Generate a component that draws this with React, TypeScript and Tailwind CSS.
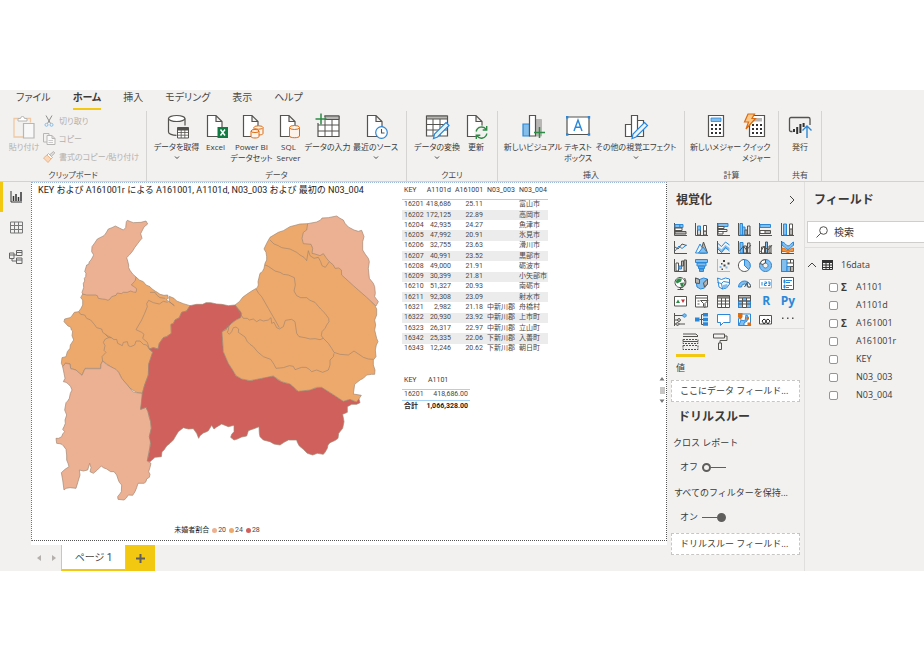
import type { ReactNode } from "react";

type CityRow = [key: string, population: string, rate: string, district: string, city: string];

const CITY_ROWS: CityRow[] = [
  ["16201", "418,686", "25.11", "", "富山市"],
  ["16202", "172,125", "22.89", "", "高岡市"],
  ["16204", "42,935", "24.27", "", "魚津市"],
  ["16205", "47,992", "20.91", "", "氷見市"],
  ["16206", "32,755", "23.63", "", "滑川市"],
  ["16207", "40,991", "23.52", "", "黒部市"],
  ["16208", "49,000", "21.91", "", "砺波市"],
  ["16209", "30,399", "21.81", "", "小矢部市"],
  ["16210", "51,327", "20.93", "", "南砺市"],
  ["16211", "92,308", "23.09", "", "射水市"],
  ["16321", "2,982", "21.18", "中新川郡", "舟橋村"],
  ["16322", "20,930", "23.92", "中新川郡", "上市町"],
  ["16323", "26,317", "22.97", "中新川郡", "立山町"],
  ["16342", "25,335", "22.06", "下新川郡", "入善町"],
  ["16343", "12,246", "20.62", "下新川郡", "朝日町"],
];

const FIELDS = [
  { name: "A1101", sum: true },
  { name: "A1101d", sum: false },
  { name: "A161001", sum: true },
  { name: "A161001r", sum: false },
  { name: "KEY", sum: false },
  { name: "N03_003", sum: false },
  { name: "N03_004", sum: false },
];

const TABS = ["ファイル", "ホーム", "挿入", "モデリング", "表示", "ヘルプ"];

const LEGEND = [
  { label: "20", dot: "bg-[#ecb093]" },
  { label: "24", dot: "bg-[#eda96c]" },
  { label: "28", dot: "bg-[#d0605c]" },
];

const G = "#55534f";
const B = "#2b88d8";
const L = "#83beec";
const S = "#b8b6b4";

/* ---------- ribbon icons ---------- */

function Icon24({ children }: { children: ReactNode }) {
  return (
    <svg viewBox="0 0 24 24" width="24" height="24" fill="none" stroke={G} className="shrink-0 overflow-visible" aria-hidden>
      {children}
    </svg>
  );
}

const DocShape = () => <path d="M3.5.5h8.5l6 6v15H3.5zM12 .5v6h6" fill="#fff" strokeWidth="1.2" />;

const GetDataIcon = () => (
  <Icon24>
    <path d="M3.5 3.5v13.5c0 2 4 3.300 8 3.300M20 3.500v7" strokeWidth="1.200" />
    <ellipse cx="11.700" cy="3.500" rx="8.200" ry="3" fill="#fff" strokeWidth="1.200" />
    <path d="M12.500 12.500h11v10.500h-11z" fill="#fff" />
    <path d="M12.500 13h11v2h-11z" fill={G} />
    <path d="M12.500 17.500h11M12.500 20.200h11M16.200 15v8M19.800 15v8" strokeWidth=".8" />
  </Icon24>
);

const ExcelIcon = () => (
  <Icon24>
    <DocShape />
    <path d="M13.500 12h10.500v11h-10.500z" fill="#107c41" stroke="none" />
    <path d="M16.500 14.500l4.500 6M21 14.500l-4.500 6" stroke="#fff" strokeWidth="1.500" />
  </Icon24>
);

const DatasetIcon = () => (
  <Icon24>
    <DocShape />
    <g stroke="#dd6b10" fill="#fdf3ea">
      <path d="M14 12.500v6c0 2 9 2 9 0v-6" />
      <ellipse cx="18.500" cy="12.500" rx="4.500" ry="1.700" />
      <path d="M11 16v5.500c0 2 8 2 8 0v-5.500" />
      <ellipse cx="15" cy="16" rx="4" ry="1.500" />
    </g>
  </Icon24>
);

const SqlIcon = () => (
  <Icon24>
    <DocShape />
    <g stroke="#dd6b10" fill="#fdf3ea">
      <path d="M12.500 12.500v8.500c0 2.300 10 2.300 10 0v-8.500" />
      <ellipse cx="17.500" cy="12.500" rx="5" ry="2" />
    </g>
  </Icon24>
);

const EnterDataIcon = () => (
  <Icon24>
    <path d="M2 1h21v20.500H2z" fill="#fff" strokeWidth="1.200" />
    <path d="M9 1h14v3.500H9z" fill={S} />
    <path d="M2 10h21M2 16h21M9 4v17.500M16 4v17.500" />
    <path d="M-1 -1h9v9h-9z" fill="#f2f1f0" stroke="none" />
    <path d="M5 -1.500v11M-.5 4h11" stroke="#2e8b45" strokeWidth="1.500" />
  </Icon24>
);

const RecentIcon = () => (
  <Icon24>
    <DocShape />
    <circle cx="17.500" cy="17.500" r="5.800" fill="#fff" stroke={B} strokeWidth="1.200" />
    <path d="M17.500 14v4h3" strokeWidth="1.100" />
  </Icon24>
);

const TransformIcon = () => (
  <Icon24>
    <path d="M1.500 1h21v20H1.500z" fill="#fff" strokeWidth="1.200" />
    <path d="M1.500 1h21v3h-21z" fill={S} />
    <path d="M1.500 9.500h21M1.500 15h21M8 4v17M15 4v17" />
    <path d="M21 7.500l3 3-11.500 11.500-4 1.500 1-4.500z" fill="#eaf4fc" stroke={B} strokeWidth="1.200" />
  </Icon24>
);

const RefreshIcon = () => (
  <Icon24>
    <DocShape />
    <circle cx="17.500" cy="17.500" r="7" fill="#f2f1f0" stroke="none" />
    <path d="M12.200 16.500a5.500 5.500 0 0 1 10-2M22.800 18.500a5.500 5.500 0 0 1-10 2.200M22.700 11v4h-4M12.300 24v-3.700h4" stroke="#2e8b45" strokeWidth="1.400" />
  </Icon24>
);

const NewVisualIcon = () => (
  <Icon24>
    <path d="M2 9h6.500v12H2z" fill={L} stroke={B} strokeWidth="1.200" />
    <path d="M14.500 4.500h6v16.500h-6z" fill={S} stroke={S} />
    <path d="M8.500 .5h6v20.500h-6z" fill="#fff" strokeWidth="1.200" />
    <path d="M18.500 12v11M13 17.500h11" stroke="#2e8b45" strokeWidth="1.500" />
  </Icon24>
);

const TextBoxIcon = () => (
  <Icon24>
    <path d="M1 2h22v17.500H1z" fill="#fff" strokeWidth="1.200" />
    <path d="M8 16l4-11 4 11M9.500 12.300h5" stroke={B} strokeWidth="1.400" />
    <path d="M0 1h2.400v2.400H0zM21.800 1h2.400v2.400h-2.400zM0 18.300h2.400v2.400H0zM21.800 18.300h2.400v2.400h-2.400z" fill={B} stroke="none" />
  </Icon24>
);

const MoreVisualsIcon = () => (
  <Icon24>
    <path d="M1.500 9.500h6v12h-6zM13.500 5.500h6v16h-6zM7.500 .5h6v21h-6z" fill="#fff" strokeWidth="1.200" />
    <path d="M20.500 7.500l3 3-11.500 11.500-4 1.500 1-4.500z" fill="#eaf4fc" stroke={B} strokeWidth="1.200" />
  </Icon24>
);

const CalculatorShape = () => (
  <>
    <path d="M4.500 .5h15v21h-15z" fill="#fff" strokeWidth="1.200" />
    <path d="M7 9h2v2H7zM11 9h2v2h-2zM15 9h2v2h-2zM7 13h2v2H7zM11 13h2v2h-2zM15 13h2v2h-2zM7 17h2v2H7zM11 17h2v2h-2zM15 17h2v2h-2z" fill="#333" stroke="none" />
  </>
);

const MeasureIcon = () => (
  <Icon24>
    <CalculatorShape />
    <path d="M7 3h10v3.500H7z" fill={L} stroke={B} strokeWidth=".8" />
  </Icon24>
);

const QuickMeasureIcon = () => (
  <Icon24>
    <CalculatorShape />
    <path d="M7 3h10v3.500H7z" fill={S} stroke="none" />
    <path d="M3 -1h6.500l-2.500 4.500h3.500l-9.500 10.500 2.500-7H-.5z" fill="#fbc98a" stroke="#dd6b10" strokeWidth="1.200" />
  </Icon24>
);

const PublishIcon = () => (
  <Icon24>
    <path d="M4.500 16.500H3q-1.500 0-1.500-1.500V4q0-1.500 1.500-1.500h17.500q1.500 0 1.500 1.500v6" strokeWidth="1.300" />
    <path d="M6 14v3M9.200 12v7M12.400 9v9M15.600 8v4" stroke="#333" strokeWidth="2" />
    <path d="M19 23V11.500M14.500 15.500l4.500-4.500 4.500 4.500" stroke={B} strokeWidth="1.400" />
  </Icon24>
);

const PasteIcon = () => (
  <Icon24>
    <path d="M8 3.500H2v18.500h9M13 3.500h5.500v4" stroke="#f0c9a2" strokeWidth="1.300" />
    <path d="M6 6V3.500h2.500a2 2 0 0 1 4 0H15V6z" fill="#fff" stroke={S} />
    <path d="M11.500 8.500h10.500v14.500h-10.500z" fill="#f8f8f8" stroke={S} strokeWidth="1.200" />
  </Icon24>
);

function Icon12({ children }: { children: ReactNode }) {
  return (
    <svg viewBox="0 0 12 12" width="12" height="12" fill="none" stroke={S} className="shrink-0 overflow-visible" aria-hidden>
      {children}
    </svg>
  );
}

const CutIcon = () => (
  <Icon12>
    <path d="M3 .5l4.500 8M9 .5l-4.500 8" stroke="#8f8d8b" />
    <circle cx="3.500" cy="9.800" r="1.500" stroke={L} />
    <circle cx="8.500" cy="9.800" r="1.500" stroke={L} />
  </Icon12>
);

const CopyIcon = () => (
  <Icon12>
    <path d="M4 9H.500V.500h5.500v2" />
    <path d="M4 2.500h5l3 3v6H4zM9 2.500v3h3" fill="#fafafa" />
    <path d="M5.500 7.500h4.500M5.500 9.500h4.500" strokeWidth=".7" />
  </Icon12>
);

const BrushIcon = () => (
  <Icon12>
    <path d="M7 3.500l3.500-3 1.300 1.500-3.300 3.200" fill="#ddd" />
    <path d="M5.500 2.500l4 4-1.500 1.300-4-3.800z" fill="#fff" />
    <path d="M4 4l4 4-3 3.500L.500 7z" fill="#f8d9bc" stroke="#eab68a" />
  </Icon12>
);

/* ---------- visualization gallery icons ---------- */

// [path, fill, stroke]
type Shape = [d: string, fill: string, stroke?: string];

const AXIS = "M.5 0v12.500H13";

const VISUALS: { name: string; shapes: Shape[] }[] = [
  { name: "積み上げ横棒グラフ", shapes: [[AXIS, "none", G], ["M1 1.500h5v3H1z", L, B], ["M6 1.500h3v3H6z", L, B], ["M1 5h7v2.500H1z", "#fff", G], ["M1 8.500h11v2.500H1z", S, G]] },
  { name: "積み上げ縦棒グラフ", shapes: [[AXIS, "none", G], ["M2.500 6h3v6h-3zM8.500 8h3v4h-3z", "#d9d8d7", G], ["M2.500 3h3v4h-3z", L, B], ["M8.500 2.500h3V8h-3z", "#fff", G]] },
  { name: "集合横棒グラフ", shapes: [[AXIS, "none", G], ["M1 .5h10v3H1z", L, B], ["M1 3.500h6v2H1zM1 6.500h9v2H1zM1 8.500h5v2.500H1z", "#fff", G]] },
  { name: "集合縦棒グラフ", shapes: [[AXIS, "none", G], ["M2 .5h2.500v11.500H2z", L, B], ["M4.500 4h2.500v8H4.500z", L, B], ["M7 7h2v5H7zM9.500 3h2.500v9H9.500z", "#e5e4e3", G]] },
  { name: "100% 積み上げ横棒グラフ", shapes: [[AXIS, "none", G], ["M1 1.500h10.500v3H1z", L, B], ["M1 7.500h10.500v3H1z", S, G], ["M1 7.500h5v3H1z", "#fff", G]] },
  { name: "100% 積み上げ縦棒グラフ", shapes: [[AXIS, "none", G], ["M2.500 1h3v11h-3z", L, B], ["M8.500 1h3v11h-3z", "#fff", G], ["M8.500 6h3v6h-3z", S, G]] },
  { name: "折れ線グラフ", shapes: [[AXIS, "none", G], ["M1 10l4-5 3 2.500L12.500 4", "none", B], ["M1 6l3 2 4-5 4.500 1.500", "none", G]] },
  { name: "面グラフ", shapes: [["M5 12L8.500 1l4 11z", S, G], ["M.500 12L5 3l5 9z", "#e8f3fc", B], ["M3.500 12l4.500-6 4.500 6z", L, B]] },
  { name: "積み上げ面グラフ", shapes: [[AXIS, "none", G], ["M1 5.500l3.500 3L8.500 4l4 3v2l-4-1-4 4L1 8z", L, "none"], ["M1 2.500l3.500 3 4-4.500 4 3M1 8l3.500 3.500 4-5 4 3.500", "none", B]] },
  { name: "折れ線および積み上げ縦棒グラフ", shapes: [[AXIS, "none", G], ["M2 1.500h3v10.500H2z", L, B], ["M5.500 5h3v7h-3zM9.500 2h2.500v10H9.500z", "#ddd", G], ["M1.500 10l4-5 3 4 4.500-5", "none", G]] },
  { name: "折れ線および集合縦棒グラフ", shapes: [[AXIS, "none", G], ["M2.500 6h3v6h-3z", "#fff", G], ["M6.500 1h2v11h-2z", L, G], ["M10 5h2v7h-2z", "#ddd", G], ["M1.500 11l3.500-6 4 4 4-5", "none", G]] },
  { name: "リボン グラフ", shapes: [[AXIS, "none", G], ["M1 1c3 0 4 4 6 4S10 2 12.500 1v3.500c-2 0-3 4-5.500 4S4 5 1 4.500z", L, B], ["M1 7c3 0 4 2.500 6 2.500S10 7 12.500 7v3.500H9.500L7 11.500 4 10.500H1z", "#f09a4a", "#dd6b10"]] },
  { name: "ウォーターフォール図", shapes: [[AXIS, "none", G], ["M2 4h2.500v8H2z", "#fff", G], ["M5 7h2.500v3H5z", L, B], ["M7.500 2h2v5h-2zM10 1h2.500v11H10z", S, G]] },
  { name: "じょうごグラフ", shapes: [["M.5 .5h12v3H.5z", L, B], ["M2 4h9v3H2z", L, B], ["M3.500 7h6v2.500h-6zM4.500 10h4v2.500h-4z", "#5aa9e6", B]] },
  { name: "散布図", shapes: [[AXIS, "none", S], ["M2.500 7h2v2h-2zM8.500 7.500h2v2h-2z", L], ["M6 1h2v2H6zM4 4h1.500v1.500H4zM10.500 3.500h2v2h-2zM6.500 5.500h2v2h-2zM4.500 9.500h1.500v1.500H4.500z", "#444"]] },
  { name: "円グラフ", shapes: [["M6.500 .5a6 6 0 1 0 4.200 10.200L6.500 6.500z", "#fff", G], ["M6.500 .5a6 6 0 0 1 4.200 10.200L6.500 6.500z", L, B]] },
  { name: "ドーナツ グラフ", shapes: [["M6.500 .5a6 6 0 1 0 .01 0zM6.500 4a2.500 2.500 0 1 1-.01 0z", L, B], ["M6.500 .5a6 6 0 0 0-5.500 4l3 1a2.500 2.500 0 0 1 2.500-1.500z", "#fff", G]] },
  { name: "ツリーマップ", shapes: [["M.5 .5h12v12H.5z", "#fff", G], ["M.5 .5h5.500v12H.5z", L, B], ["M6 7.500h3.500v5H6z", L, B], ["M6 4h6.500M9.500 .5V4", "none", G], ["M9.500 7.500h3v5h-3z", S, G]] },
  { name: "マップ", shapes: [["M6 .5a5 5 0 1 0 .01 0z", "#fff", G], ["M4 1.500l4 0-1 3-4 2-1.500-2zM6 6l4-.5-1 4-2 0z", "#2e8b45"], ["M10.500 1c3 4 1 9-4 10v1.500M3.500 12.500h6", "none", G]] },
  { name: "塗り分け地図", shapes: [["M.5 1l4 1.500 4-1.500 4 1v5l-3 4-4 1-3.500-2z", L, B], ["M.5 1l4 1.500v4l-4-.5zM8.500 6l4-4v5l-3 3z", S, G]] },
  { name: "図形マップ", shapes: [["M.5 1l4 1.500 4-1.500 4 1v5l-3 4-4 1-3.500-2z", "#fff", B], ["M.5 5.500l4 1 2-2 6 1M4.500 6.500l1 5.500", "none", B], ["M6 8l4-1 1 1.500-2 2.500-3 .5z", L]] },
  { name: "ゲージ", shapes: [["M.5 10a6 6 0 0 1 12 0h-3a3 3 0 0 0-6 0z", L, B], ["M9 5.500a4 4 0 0 1 3.500 4.500h-2.500z", "#fff", G], ["M6.500 10l2.500-4", "none", G]] },
  { name: "カード", shapes: [["M.5 2.500h12v8.500H.5z", "#fff", S], ["M3 5v3.500M5.500 5h2v1.500h-2v2h2M9 5h2v3.500H9M9.500 6.700H11", "none", B]] },
  { name: "複数の行カード", shapes: [["M.5 .5h12v12H.5z", "#fff", G], ["M3 3h1v3H3zM3 8h1v3H3z", B, B], ["M5 3.500h6M5 5.500h4M5 8.500h6M5 10.500h3", "none", B]] },
  { name: "KPI", shapes: [["M.5 1.500h12v9.500H.5z", "#fff", G], ["M2 8l2-3.500L6 8z", "#2e8b45"], ["M7 4.500h4L9 8z", "#c8313b"]] },
  { name: "スライサー", shapes: [["M.5 .5h12v11.500H.5z", "#fff", G], ["M.5 3h12M2.500 6h2M2.500 9h2", "none", G], ["M5.500 5.500h7.500l-3 3v4l-1.500-1v-3z", "#fff", G]] },
  { name: "テーブル", shapes: [["M.5 .5h12v12H.5z", "#fff", G], ["M.5 1h12v2H.5z", S, G], ["M.5 6h12M.5 9h12M4.500 3v9.500M8.500 3v9.500", "none", G]] },
  { name: "マトリックス", shapes: [["M.5 .5h12v12H.5z", "#fff", G], ["M.5 .5h12v2.500H.5z", S, G], ["M.5 6h4v6.500h-4zM4.500 3h4v3h-4zM8.500 6h4v6.500h-4z", L, B], ["M.5 6h12M.5 9h12M4.500 3v9.500M8.500 3v9.500", "none", G]] },
  { name: "R", shapes: [] },
  { name: "Py", shapes: [] },
  { name: "主要なインフルエンサー", shapes: [["M.5 0v13M1 2.500h8M1 7h5M1 11h10", "none", G], ["M10.500 .8a1.700 1.700 0 1 0 .01 0z", L, B], ["M5 5.500a1.500 1.500 0 1 0 .01 0zM3.500 9.500a1.500 1.500 0 1 0 .01 0z", S, G]] },
  { name: "分解ツリー", shapes: [["M0 4.500h4.500v4H0zM8 0h5v3.500H8zM8 4.700h5v3.500H8zM8 9.300h5v3.500H8z", B], ["M4.500 6.500H8M6.500 1.500v10M6.500 1.500H8M6.500 11.500H8", "none", G]] },
  { name: "Q&A", shapes: [["M.5 1.500h12.500v8H6.500l-3 3v-3h-3z", "#fff", B]] },
  { name: "ArcGIS マップ", shapes: [["M3 1h9.500v11.500H.5V6z", "#fff", B], ["M1 12l2-5 4 1 1-6 2 1-1 5-3 2v2.500H1z", L, B], ["M0 0h4.500v4L2.300 7 0 4zM9.500 9.500h3.500v3.500H9.500zM8.500 4h2.500v2.500H8.500z", "#dd6b10"]] },
  { name: "Power Apps", shapes: [["M.5 2.500h12v8.500H.5z", "#fff", G], ["M3 8l2-2 2.500 2L5 11zM6.500 8L9 6l2 2-2 3z", "#fff", "#222"]] },
  { name: "その他", shapes: [["M1 4.500h1.500V6H1zM6 4.500h1.500V6H6zM11 4.500h1.500V6H11z", G]] },
];

/* ---------- ribbon ---------- */

type RibbonItem = { lines: string[]; width: string; icon: ReactNode; menu?: boolean };

const RIBBON: { title: string; className: string; items: RibbonItem[] }[] = [
  {
    title: "データ",
    className: "w-[260px]",
    items: [
      { lines: ["データを取得"], width: "w-12", icon: <GetDataIcon />, menu: true },
      { lines: ["Excel"], width: "w-[30px]", icon: <ExcelIcon /> },
      { lines: ["Power BI", "データセット"], width: "w-[42px]", icon: <DatasetIcon /> },
      { lines: ["SQL", "Server"], width: "w-8", icon: <SqlIcon /> },
      { lines: ["データの入力"], width: "w-[46px]", icon: <EnterDataIcon /> },
      { lines: ["最近のソース"], width: "w-[50px]", icon: <RecentIcon />, menu: true },
    ],
  },
  {
    title: "クエリ",
    className: "w-[91px]",
    items: [
      { lines: ["データの変換"], width: "w-12", icon: <TransformIcon />, menu: true },
      { lines: ["更新"], width: "w-[30px]", icon: <RefreshIcon /> },
    ],
  },
  {
    title: "挿入",
    className: "w-[187px]",
    items: [
      { lines: ["新しいビジュアル"], width: "w-[58px]", icon: <NewVisualIcon /> },
      { lines: ["テキスト", "ボックス"], width: "w-8", icon: <TextBoxIcon /> },
      { lines: ["その他の視覚エフェクト"], width: "w-[84px]", icon: <MoreVisualsIcon />, menu: true },
    ],
  },
  {
    title: "計算",
    className: "w-[94px]",
    items: [
      { lines: ["新しいメジャー"], width: "w-[50px]", icon: <MeasureIcon /> },
      { lines: ["クイック", "メジャー"], width: "w-8", icon: <QuickMeasureIcon /> },
    ],
  },
  {
    title: "共有",
    className: "w-[43px]",
    items: [{ lines: ["発行"], width: "w-[42px]", icon: <PublishIcon /> }],
  },
];

function Chevron({ className = "" }: { className?: string }) {
  return (
    <svg viewBox="0 0 10 10" width="10" height="10" fill="none" stroke="#444" className={className} aria-hidden>
      <path d="M1 3l4 4 4-4" />
    </svg>
  );
}

function RibbonButton({ item }: { item: RibbonItem }) {
  return (
    <button type="button" className={`flex flex-col items-center ${item.width}`}>
      {item.icon}
      <span className="mt-0.5 flex flex-col items-center text-[8px] leading-[11px] whitespace-nowrap text-[#3b3a39]">
        {item.lines.map((line) => (
          <span key={line}>{line}</span>
        ))}
      </span>
      {item.menu && (
        <svg viewBox="0 0 6 4" width="6" height="4" fill="none" stroke="#444" className="mt-1" aria-hidden>
          <path d="M1 .5l2 2 2-2" />
        </svg>
      )}
    </button>
  );
}

function Ribbon() {
  return (
    <header className="border-b border-[#c9d3e2] [font-feature-settings:'palt']">
      <nav className="flex h-[20px] gap-[22px] pl-4 text-[10px] leading-[14px] text-[#4a4846]">
        {TABS.map((tab) => (
          <button
            key={tab}
            type="button"
            className={
              tab === "ホーム"
                ? "border-b-2 border-[#f2c811] pb-1 font-bold whitespace-nowrap text-[#3b3a39]"
                : "border-b-2 border-transparent pb-1 whitespace-nowrap"
            }
          >
            {tab}
          </button>
        ))}
      </nav>
      <div className="mt-px flex h-[70px]">
        <section className="flex w-[147px] flex-col border-r border-[#d6d4d2] pt-1">
          <div className="flex flex-1 pl-[5px] text-[8px] text-[#b3b0ad]">
            <button type="button" className="flex w-[38px] flex-col items-center leading-[11px] whitespace-nowrap">
              <PasteIcon />
              <span className="mt-0.5">貼り付け</span>
            </button>
            <div className="flex flex-col gap-1.5 leading-3 whitespace-nowrap">
              <button type="button" className="flex gap-1">
                <CutIcon />
                切り取り
              </button>
              <button type="button" className="flex gap-1">
                <CopyIcon />
                コピー
              </button>
              <button type="button" className="flex gap-1">
                <BrushIcon />
                書式のコピー/貼り付け
              </button>
            </div>
          </div>
          <h3 className="text-center text-[8px] leading-3 text-[#4a4846]">クリップボード</h3>
        </section>
        {RIBBON.map((group) => (
          <section key={group.title} className={`flex flex-col border-r border-[#d6d4d2] pt-1 ${group.className}`}>
            <div className="flex flex-1 items-start justify-center">
              {group.items.map((item) => (
                <RibbonButton key={item.lines[0]} item={item} />
              ))}
            </div>
            <h3 className="text-center text-[8px] leading-3 text-[#4a4846]">{group.title}</h3>
          </section>
        ))}
      </div>
    </header>
  );
}

/* ---------- left rail ---------- */

function ViewRail() {
  return (
    <nav className="flex w-[31px] shrink-0 flex-col">
      <button type="button" aria-label="レポート" className="flex h-[30px] items-center border-l-[3px] border-[#f2c811] pl-[7px]">
        <svg viewBox="0 0 12 12" width="12" height="12" fill="none" stroke="#333" aria-hidden>
          <path d="M1 0v11h11" />
          <path d="M3.500 5v5M6 3v7M8.500 6v4M11 1v9" strokeWidth="1.500" />
        </svg>
      </button>
      <button type="button" aria-label="データ" className="flex h-[30px] items-center pl-[10px]">
        <svg viewBox="0 0 13 13" width="13" height="13" fill="none" stroke="#777" aria-hidden>
          <path d="M.5 1h12v11H.5zM.5 4.500h12M.5 8.500h12M4.500 1v11M8.500 1v11" />
        </svg>
      </button>
      <button type="button" aria-label="モデル" className="flex h-[30px] items-center pl-[9px]">
        <svg viewBox="0 0 14 14" width="14" height="14" fill="none" stroke="#666" aria-hidden>
          <path d="M.5 3h4.500v5.500H.5zM7.500 .5h5.500v5H7.500zM7.500 8h5.500v5.500H7.500zM5 5h2.500M3 8.500v2.500h4.500M7.500 2.500h5.500M7.500 10h5.500M.5 5h4.500" />
        </svg>
      </button>
    </nav>
  );
}

/* ---------- report canvas ---------- */

function PrefectureMap() {
  return (
    <svg
      viewBox="0 0 1050 900"
      className="ml-2 h-[300px] w-[350px]"
      stroke="#a08570"
      strokeWidth="2"
      strokeLinejoin="round"
      role="img"
      aria-label="富山県の市町村別 未婚者割合"
    >
      {/* 高岡・射水・小矢部・砺波 */}
      <path
        fill="#eda96c"
        d="M288 216L298 225 310 230 318 240 330 245 334 250 345 258 352 262 360 268 372 271 383 270 385 280 378 284 390 292 403 302 388 290 388 274 402 280 410 288 430 296 450 302 440 318 425 322 418 338 405 345 400 356 393 358 394 385 380 395 370 398 358 415 354 432 340 428 328 432 338 442 332 460 326 478 325 510 314 540 307 565 290 562 270 550 245 520 236 502 212 485 188 468 183 478 182 490 135 490 126 510 118 505 108 495 92 490 90 476 76 474 74 486 70 488 64 475 66 458 78 455 82 440 90 430 91 420 101 405 96 392 98 378 94 375 92 366 84 363 72 350 74 342 90 338 94 335 103 322 116 320 123 310 128 300 128 285 122 278 128 267 200 250z"
      />
      {/* 氷見 */}
      <path
        fill="#ecb093"
        d="M262 46L272 50 280 53 303 52 318 48 323 57 312 66 306 78 302 86 306 100 299 108 290 120 284 128 278 138 268 150 260 158 263 168 266 180 266 188 270 196 278 207 288 216 286 226 283 230 274 240 284 246 290 252 288 262 280 261 272 258 262 262 250 262 244 266 232 264 228 271 215 275 210 282 204 286 196 283 186 282 175 280 172 272 166 270 140 270 128 267 126 262 131 248 130 235 134 228 133 220 137 215 138 204 134 200 140 180 146 178 148 170 153 165 160 152 160 148 155 140 156 125 164 114 172 102 180 98 192 92 198 84 205 72 216 68 226 63 238 69 250 75 257 68 259 50z"
      />
      {/* 南砺 */}
      <path
        fill="#ecb093"
        d="M188 468L200 479 212 485 228 493 236 502 245 520 262 540 280 561 290 563 307 565 307 580 305 595 302 613 318 607 324 620 328 638 332 650 334 670 328 695 332 705 330 725 325 750 322 768 333 775 330 787 326 800 330 808 328 817 320 822 318 830 312 835 294 835 290 848 285 860 278 871 265 870 258 880 252 885 234 883 233 875 240 866 244 860 245 840 238 832 235 825 230 810 222 800 212 800 200 792 190 788 184 783 172 795 160 805 150 800 153 788 149 775 143 795 130 798 118 795 120 810 114 830 108 850 90 848 78 850 72 855 70 840 68 825 64 803 75 793 87 785 84 775 80 765 80 750 78 733 72 725 66 718 58 716 50 715 48 700 56 700 65 695 68 687 74 680 68 673 72 665 76 655 75 645 80 630 74 615 78 593 83 588 88 580 91 565 96 555 92 545 85 537 78 532 70 530 75 520 72 505 68 485 76 475 90 477 92 491 108 495 126 511 135 491 182 491 183 477z"
      />
      {/* 富山 */}
      <path
        fill="#d0605c"
        d="M450 302L470 298 488 298 498 293 512 293 530 297 545 298 565 302 585 300 598 315 605 325 602 338 588 345 575 355 560 370 546 380 550 440 565 475 578 495 588 512 605 522 630 527 660 521 680 515 700 513 715 525 725 530 740 535 750 537 762 547 770 556 775 559 810 555 830 548 845 547 880 569 910 589 930 583 948 591 956 578 960 593 950 598 935 598 922 605 922 622 908 628 912 650 908 670 896 685 894 700 886 706 870 713 864 720 862 730 855 742 850 748 832 745 818 750 802 745 790 733 778 723 772 712 770 705 745 705 732 712 720 720 702 717 690 710 670 705 660 695 658 685 657 665 645 670 625 677 620 693 605 696 590 703 582 705 572 697 575 688 582 680 582 661 565 665 545 657 530 666 522 672 515 661 505 677 500 680 490 684 480 692 476 700 470 685 460 671 445 672 430 668 415 680 407 693 400 705 390 715 380 723 372 735 366 740 364 755 345 757 330 770 322 768 328 740 332 715 328 695 334 670 332 650 324 620 318 607 302 613 307 565 314 540 325 510 326 478 332 460 338 442 328 432 340 428 354 432 358 415 370 398 380 395 394 385 393 358 400 356 405 345 418 338 425 322 440 318z"
      />
      <g transform="translate(480 0)">
        {/* 滑川・魚津・黒部・上市・立山・入善 */}
        <path
          fill="#eda96c"
          d="M105 300L118 290 128 277 140 268 155 258 172 248 175 240 174 230 180 205 187 200 192 190 195 175 200 165 200 155 198 142 192 132 200 115 210 97 235 82 250 77 270 65 300 57 323 56 400 150 525 302 530 312 530 330 524 345 527 360 524 375 530 400 534 410 529 420 526 435 528 455 520 465 520 480 525 495 524 508 515 508 500 510 490 520 480 525 464 538 460 567 484 571 478 580 470 591 450 583 430 589 400 569 365 547 350 547 330 555 295 559 282 547 270 537 245 530 220 513 180 521 150 527 125 522 108 512 98 495 85 475 70 440 66 380 80 370 95 355 108 345 122 338 125 325 118 315z"
        />
        {/* 朝日 */}
        <path
          fill="#ecb093"
          d="M323 56L350 51 362 45 366 39 385 38 410 33 420 40 430 45 435 55 445 66 462 75 475 79 485 76 492 95 488 110 488 135 496 148 505 160 508 170 505 190 508 220 520 235 524 245 526 265 524 275 535 290 528 303 500 277 460 242 425 210 424 195 416 189 405 190 400 180 388 170 378 158 370 146 360 152 345 147 336 145 338 130 333 118 310 116 306 100 310 82 320 75z"
        />
        <g fill="none">
          <path d="M210 105L222 117 235 122 245 128 270 132 290 142 300 150 312 157 320 167 325 137 330 152 342 160 355 157 362 170 366 182 376 187 388 170" />
          <path d="M195 180L205 184 225 198 240 202 250 208 265 210 283 218 286 240 282 258 290 272 302 278 320 278 330 286 345 292 355 304 362 312 375 325 386 340 387 350 380 360 375 370 366 380 364 392 370 400 385 415 395 430 402 442 420 448 445 450 462 438 480 450 490 457 505 462 520 463" />
          <path d="M168 252L176 265 185 275 205 310 225 345 238 368" />
          <path d="M105 300L112 310 120 325 130 340 142 340 148 345 160 342 170 350 180 344 190 348 205 345 213 338 215 355 222 352 230 368 238 372 250 365 256 346 275 343 285 350 290 385 297 395 315 398 330 402 345 401 360 404 370 400" />
          <path d="M66 380L80 373 80 365 87 360 85 375 82 382 88 388 95 380 100 368 108 366 116 372 115 382 135 396 142 410 150 418 160 425 172 440 190 455 212 463 222 478 228 490 250 488 268 482 280 484 285 494 305 487 318 487 328 493 335 500 350 495 368 502 385 495 390 480 390 465 400 455 402 445" />
        </g>
      </g>
      <g fill="none">
        <path d="M116 320L122 328 134 330 140 340 152 345 163 358 170 368 185 372 188 382 202 392 214 398 222 404 230 403 233 415 247 422 250 412 262 410 265 422 272 425 284 420 288 408 300 408 310 418 320 420 328 432" />
        <path d="M196 388L206 398 196 402 190 412 195 422 192 436 198 442 186 455 188 468M206 398L214 398" />
        <path d="M383 292L370 289 358 297 340 293 326 286 320 296 322 305 314 325 305 345 288 374 305 382 312 388 308 400 322 412 328 432" />
        <path d="M330 262L345 262 350 270 360 278 376 280" />
      </g>
    </svg>
  );
}

function CityTable() {
  return (
    <table className="h-[171px] w-[146px] table-fixed text-[7px] leading-[9px] whitespace-nowrap text-[#4a4846]">
      <colgroup>
        <col className="w-[22px]" />
        <col className="w-[31px]" />
        <col className="w-[30px]" />
        <col className="w-8" />
        <col className="w-[31px]" />
      </colgroup>
      <thead>
        <tr className="h-4 border-b border-[#a6d3f5] text-[#3b3a39]">
          <th className="pl-0.5 text-left font-normal">KEY</th>
          <th className="pr-1 text-right font-normal">A1101d</th>
          <th className="pr-0.5 text-right font-normal">A161001</th>
          <th className="pl-0.5 text-left font-normal">N03_003</th>
          <th className="pl-0.5 text-left font-normal">N03_004</th>
        </tr>
      </thead>
      <tbody>
        {CITY_ROWS.map(([key, population, rate, district, city]) => (
          <tr key={key} className="even:bg-[#ececec]">
            <td className="pl-0.5">{key}</td>
            <td className="pr-1 text-right">{population}</td>
            <td className="pr-0.5 text-right">{rate}</td>
            <td className="pl-0.5">{district}</td>
            <td className="pl-0.5">{city}</td>
          </tr>
        ))}
      </tbody>
    </table>
  );
}

function TotalTable() {
  return (
    <table className="w-[68px] table-fixed text-[7px] leading-[9px] whitespace-nowrap text-[#4a4846]">
      <colgroup>
        <col className="w-[22px]" />
        <col />
      </colgroup>
      <thead>
        <tr className="h-4 border-b border-[#a6d3f5] text-[#3b3a39]">
          <th className="pl-0.5 text-left font-normal">KEY</th>
          <th className="pl-1 text-left font-normal">A1101</th>
        </tr>
      </thead>
      <tbody>
        <tr className="h-[11px] border-b border-[#a6d3f5]">
          <td className="pl-0.5">16201</td>
          <td className="pr-0.5 text-right">418,686.00</td>
        </tr>
      </tbody>
      <tfoot>
        <tr className="h-3 font-bold text-[#252423]">
          <td className="pl-0.5">合計</td>
          <td className="pr-0.5 text-right">1,066,328.00</td>
        </tr>
      </tfoot>
    </table>
  );
}

function ReportCanvas() {
  return (
    <main className="flex min-w-0 flex-1 flex-col bg-white font-['Roboto','Noto_Sans_CJK_JP',sans-serif]">
      <div className="flex border border-dotted border-[#555] border-l-[#3a7bd5] border-t-[#9db8dd] pb-1">
        <section className="flex w-[370px] flex-col">
          <h2 className="h-[22px] pl-1.5 text-[9px] leading-[14px] whitespace-nowrap text-[#252423]">
            KEY および A161001r による A161001, A1101d, N03_003 および 最初の N03_004
          </h2>
          <PrefectureMap />
          <div className="mt-[19px] flex items-center justify-center gap-[3px] text-[7px] leading-3 text-[#4a4846]">
            <span className="text-[#252423]">未婚者割合</span>
            {LEGEND.map((entry) => (
              <span key={entry.label} className="flex items-center gap-px">
                <span className={`size-[5px] rounded-full ${entry.dot}`} />
                {entry.label}
              </span>
            ))}
          </div>
        </section>
        <section className="flex flex-1 flex-col">
          <CityTable />
          <div className="mt-[19px] flex justify-between">
            <TotalTable />
            <div className="mt-1 flex h-[26px] w-2 flex-col items-center justify-between" aria-hidden>
              <svg viewBox="0 0 6 4" width="6" height="4" fill="#777">
                <path d="M3 0l2.500 3.500h-5z" />
              </svg>
              <span className="h-[7px] w-[5px] bg-[#c8c6c4]" />
              <svg viewBox="0 0 6 4" width="6" height="4" fill="#777">
                <path d="M3 4L.5 .5h5z" />
              </svg>
            </div>
          </div>
        </section>
      </div>
      <footer className="mt-1 flex h-[26px] items-center bg-[#f2f1f0] text-[10px]">
        <button type="button" aria-label="前のページ" className="flex w-[15px] justify-center">
          <svg viewBox="0 0 4 6" width="4" height="6" fill="#b3b0ad">
            <path d="M4 0v6L0 3z" />
          </svg>
        </button>
        <button type="button" aria-label="次のページ" className="flex w-[15px] justify-center">
          <svg viewBox="0 0 4 6" width="4" height="6" fill="#b3b0ad">
            <path d="M0 0v6l4-3z" />
          </svg>
        </button>
        <button
          type="button"
          className="h-full w-[65px] border-x border-b-2 border-x-[#c8c6c4] border-b-[#f2c811] bg-white text-[#4a4846] [font-feature-settings:'palt']"
        >
          ページ 1
        </button>
        <button type="button" aria-label="新しいページ" className="flex h-full w-[29px] items-center justify-center bg-[#f2c811]">
          <svg viewBox="0 0 9 9" width="9" height="9" stroke="#605e5c" strokeWidth="2">
            <path d="M4.500 0v9M0 4.500h9" />
          </svg>
        </button>
      </footer>
    </main>
  );
}

/* ---------- side panes ---------- */

function VisualIcon({ name, shapes }: { name: string; shapes: Shape[] }) {
  return (
    <button type="button" aria-label={name} className="flex h-[18px] items-center text-[12px] leading-[14px] font-bold text-[#2b88d8]">
      {shapes.length === 0 ? (
        <span className={name === "R" ? "pl-[3px]" : ""}>{name}</span>
      ) : (
        <svg viewBox="0 0 13 13" width="13" height="13" className="overflow-visible" aria-hidden>
          {shapes.map(([d, fill, stroke], i) => (
            <path key={i} d={d} fill={fill} stroke={stroke ?? "none"} strokeWidth="1" />
          ))}
        </svg>
      )}
    </button>
  );
}

function Toggle({ on = false }: { on?: boolean }) {
  return (
    <input
      type="checkbox"
      role="switch"
      defaultChecked={on}
      className="flex h-[9px] w-6 appearance-none items-center before:size-[9px] before:shrink-0 before:rounded-full before:border-2 before:border-[#605e5c] after:h-px after:flex-1 after:bg-[#605e5c] checked:flex-row-reverse checked:before:bg-[#605e5c]"
    />
  );
}

function VisualizationsPane() {
  return (
    <aside className="flex w-[137px] shrink-0 flex-col text-[9px] leading-3 whitespace-nowrap text-[#3b3a39]">
      <div className="flex items-center justify-between py-2.5 pr-[7px] pl-[9px]">
        <h2 className="text-[12px] leading-4 font-bold">視覚化</h2>
        <button type="button" aria-label="折りたたむ">
          <Chevron className="-rotate-90" />
        </button>
      </div>
      <div className="mt-0.5 grid grid-cols-6 border-b border-[#e1dfdd] pr-0.5 pl-[7px]">
        {VISUALS.map((visual) => (
          <VisualIcon key={visual.name} {...visual} />
        ))}
      </div>
      <div className="flex h-[28px] pl-[9px]">
        <button type="button" aria-label="フィールド" className="flex w-[29px] items-center justify-center border-b-[3px] border-[#f2c811]">
          <svg viewBox="0 0 17 17" width="17" height="17" fill="none" stroke={G} aria-hidden>
            <path d="M1 6.500h15v4H1zM1 12.500h15v4H1z" strokeDasharray="2 1" />
            <path d="M1 1h13l2 2M1 3.500h15M1 8.500h15" />
          </svg>
        </button>
        <button type="button" aria-label="書式" className="flex w-[29px] items-center justify-center border-b-[3px] border-transparent">
          <svg viewBox="0 0 17 17" width="17" height="17" fill="none" stroke={G} aria-hidden>
            <path d="M2.500 1h11v4h-11zM13.500 3H16v4.500H9V10M7.500 10h3v6.500h-3z" />
          </svg>
        </button>
      </div>
      <h3 className="mt-[5px] pl-[9px]">値</h3>
      <div className="mx-[4px] mt-1.5 truncate border border-dashed border-[#c8c6c4] bg-white py-1 pl-2">ここにデータ フィールド...</div>
      <h2 className="mt-[7px] pl-[11px] text-[12px] leading-4 font-bold">ドリルスルー</h2>
      <div className="mt-3 pl-1.5">クロス レポート</div>
      <label className="mt-3 flex items-center gap-1 pl-[13px]">
        オフ
        <Toggle />
      </label>
      <div className="mt-3.5 pl-[7px]">すべてのフィルターを保持...</div>
      <label className="mt-3 flex items-center gap-1 pl-[13px]">
        オン
        <Toggle on />
      </label>
      <div className="mx-[4px] mt-2.5 truncate border border-dashed border-[#c8c6c4] bg-white py-1 pl-2">ドリルスルー フィールド...</div>
    </aside>
  );
}

function FieldsPane() {
  return (
    <aside className="flex w-[120px] shrink-0 flex-col border-l border-[#e1dfdd] text-[9px] leading-3 text-[#3b3a39]">
      <h2 className="py-2.5 pl-[9px] text-[12px] leading-4 font-bold">フィールド</h2>
      <div className="border-b border-[#e1dfdd] pt-[3px] pb-1 pl-0.5">
        <label className="flex h-[22px] items-center gap-1.5 border border-r-0 border-[#d0cecc] bg-white pl-2">
          <svg viewBox="0 0 12 12" width="12" height="12" fill="none" stroke={G} aria-label="検索">
            <circle cx="7.500" cy="4.500" r="3.800" />
            <path d="M4.800 7.200L.5 11.500" />
          </svg>
          <input type="text" placeholder="検索" className="w-20 text-[10px] leading-4 outline-none placeholder:text-[#3b3a39]" />
        </label>
      </div>
      <button type="button" className="mt-[7px] flex h-[19px] items-center pl-[2px]">
        <Chevron className="rotate-180" />
        <svg viewBox="0 0 11 10" width="11" height="10" fill="none" stroke="#333" className="ml-[5px]" aria-hidden>
          <path d="M.5 .5h10v9H.5zM.5 5h10M.5 7.500h10M4 2v7.500M7.500 2v7.500" />
          <path d="M0 0h11v3H0z" fill="#333" stroke="none" />
        </svg>
        <span className="ml-2">16data</span>
      </button>
      <ul className="mt-1">
        {FIELDS.map((field) => (
          <li key={field.name}>
            <label className="flex h-[18px] items-center pl-6">
              <input type="checkbox" className="size-[9px] appearance-none rounded-[2px] border border-[#979593] bg-white" />
              <span className="w-[18px] pl-[3px] text-[10px] font-bold">{field.sum ? "Σ" : ""}</span>
              {field.name}
            </label>
          </li>
        ))}
      </ul>
    </aside>
  );
}

export default function App() {
  return (
    <div className="min-h-screen bg-white pt-[90px] font-['Open_Sans','Noto_Sans_CJK_JP',sans-serif]">
      <div className="bg-[#f2f1f0]">
        <Ribbon />
        <div className="flex">
          <ViewRail />
          <ReportCanvas />
          <VisualizationsPane />
          <FieldsPane />
        </div>
      </div>
    </div>
  );
}
